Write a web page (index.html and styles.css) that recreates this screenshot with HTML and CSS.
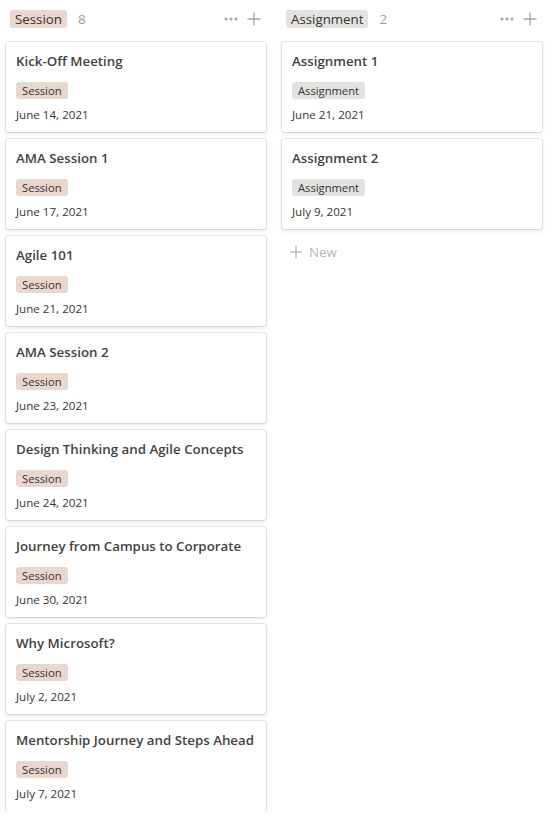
FILE: index.html
```html
<!DOCTYPE html>
<html>
<head>
<meta charset="utf-8">
<link rel="stylesheet" href="styles.css">
</head>
<body>
<div class="board">
  <div class="column">
    <div class="col-head">
      <div class="head-left"><span class="tag tag-session tag-lg">Session</span><span class="count">8</span></div>
      <div class="head-right">
        <svg class="ico" width="16" height="16" viewBox="0 0 16 16"><circle cx="3" cy="8" r="1.5"/><circle cx="8" cy="8" r="1.5"/><circle cx="13" cy="8" r="1.5"/></svg>
        <svg class="ico" width="16" height="16" viewBox="0 0 16 16"><path d="M8 1.5v13M1.5 8h13" stroke-width="1.3" fill="none"/></svg>
      </div>
    </div>
    <div class="cards">
      <div class="card"><div class="title">Kick-Off Meeting</div><div class="props"><span class="tag tag-session">Session</span></div><div class="date">June 14, 2021</div></div>
      <div class="card"><div class="title">AMA Session 1</div><div class="props"><span class="tag tag-session">Session</span></div><div class="date">June 17, 2021</div></div>
      <div class="card"><div class="title">Agile 101</div><div class="props"><span class="tag tag-session">Session</span></div><div class="date">June 21, 2021</div></div>
      <div class="card"><div class="title">AMA Session 2</div><div class="props"><span class="tag tag-session">Session</span></div><div class="date">June 23, 2021</div></div>
      <div class="card"><div class="title">Design Thinking and Agile Concepts</div><div class="props"><span class="tag tag-session">Session</span></div><div class="date">June 24, 2021</div></div>
      <div class="card"><div class="title">Journey from Campus to Corporate</div><div class="props"><span class="tag tag-session">Session</span></div><div class="date">June 30, 2021</div></div>
      <div class="card"><div class="title">Why Microsoft?</div><div class="props"><span class="tag tag-session">Session</span></div><div class="date">July 2, 2021</div></div>
      <div class="card"><div class="title">Mentorship Journey and Steps Ahead</div><div class="props"><span class="tag tag-session">Session</span></div><div class="date">July 7, 2021</div></div>
    </div>
  </div>
  <div class="column">
    <div class="col-head">
      <div class="head-left"><span class="tag tag-assign tag-lg">Assignment</span><span class="count">2</span></div>
      <div class="head-right">
        <svg class="ico" width="16" height="16" viewBox="0 0 16 16"><circle cx="3" cy="8" r="1.5"/><circle cx="8" cy="8" r="1.5"/><circle cx="13" cy="8" r="1.5"/></svg>
        <svg class="ico" width="16" height="16" viewBox="0 0 16 16"><path d="M8 1.5v13M1.5 8h13" stroke-width="1.3" fill="none"/></svg>
      </div>
    </div>
    <div class="cards">
      <div class="card"><div class="title">Assignment 1</div><div class="props"><span class="tag tag-assign">Assignment</span></div><div class="date">June 21, 2021</div></div>
      <div class="card"><div class="title">Assignment 2</div><div class="props"><span class="tag tag-assign">Assignment</span></div><div class="date">July 9, 2021</div></div>
    </div>
    <div class="new">
      <svg class="ico-new" width="14" height="14" viewBox="0 0 14 14"><path d="M7 1v12M1 7h12" stroke-width="1.2" fill="none"/></svg>
      <span>New</span>
    </div>
  </div>
</div>
</body>
</html>
```

FILE: styles.css
```css
html, body {
  margin: 0;
  padding: 0;
  background: #fff;
}
body {
  font-family: "Open Sans", "Noto Sans", sans-serif;
  color: rgb(55, 53, 47);
}
.board {
  display: flex;
  gap: 16px;
  padding: 0 6px;
}
.column {
  width: 260px;
  flex: none;
}
.col-head {
  height: 38px;
  display: flex;
  align-items: center;
  justify-content: space-between;
  padding: 0 4px;
  margin-bottom: 4px;
}
.head-left {
  display: flex;
  align-items: center;
  gap: 11px;
}
.count {
  font-size: 13.5px;
  color: rgba(55, 53, 47, 0.5);
}
.head-right {
  display: flex;
  align-items: center;
  gap: 7px;
  padding-right: 0;
}
.ico {
  fill: rgba(55, 53, 47, 0.45);
  stroke: rgba(55, 53, 47, 0.45);
}
.ico circle { stroke: none; }
.cards {
  display: flex;
  flex-direction: column;
  gap: 7px;
}
.card {
  background: #fff;
  border-radius: 3px;
  box-shadow: rgba(15, 15, 15, 0.1) 0 0 0 1px, rgba(15, 15, 15, 0.1) 0 2px 4px;
  padding: 9px 10px 8px;
  height: 73px;
}
.title {
  font-size: 13.3px;
  font-weight: 600;
  line-height: 20px;
  color: rgb(68, 66, 61);
  white-space: nowrap;
}
.props {
  margin-top: 11px;
  height: 18px;
  display: flex;
}
.tag {
  display: inline-flex;
  align-items: center;
  height: 17px;
  padding: 0 6px;
  border-radius: 3px;
  font-size: 11.2px;
  line-height: 17px;
  white-space: nowrap;
}
.tag-lg {
  height: 18px;
  font-size: 13.3px;
  line-height: 18px;
  padding: 0 5px;
}
.tag-session { background: rgb(233, 214, 205); }
.tag-assign { background: rgb(227, 226, 224); }
.date {
  margin-top: 7px;
  font-size: 11.6px;
  line-height: 16px;
}
.new {
  display: flex;
  align-items: center;
  gap: 6px;
  height: 32px;
  padding: 0 7px;
  margin-top: 7px;
  color: rgba(55, 53, 47, 0.4);
  font-size: 13.3px;
}
.ico-new {
  stroke: rgba(55, 53, 47, 0.4);
}
```
